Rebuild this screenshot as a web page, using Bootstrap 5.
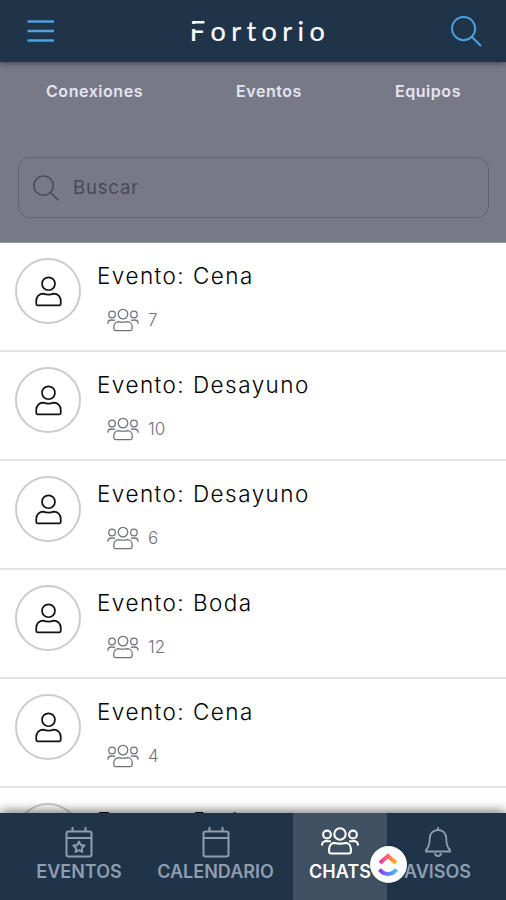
<!DOCTYPE html>
<html lang="es">
<head>
<meta charset="utf-8">
<meta name="viewport" content="width=device-width, initial-scale=1">
<title>Fortorio</title>
<link href="https://cdn.jsdelivr.net/npm/bootstrap@5.3.0/dist/css/bootstrap.min.css" rel="stylesheet">
<style>
body{font-family:Inter,"Liberation Sans",sans-serif;background:#fff}
svg{display:block;fill:none;stroke:currentColor;flex:none}
.screen{width:506px;height:900px}
.topbar{height:62px;background:#1f3349;color:#4aa3df;box-shadow:0 1px 6px rgba(20,25,40,.6);z-index:2;padding:0 24px 0 27px}
.brand{font-family:Lato,sans-serif;font-size:27px;line-height:62px;letter-spacing:5.45px;color:#fff;margin-left:14px;-webkit-text-stroke:.2px #fff}
.brand-f{position:relative;display:inline-block}
.brand-f::after{content:"";position:absolute;left:0;top:24px;width:16px;height:4.5px;background:#1f3349}
.filters{height:181px;background:#787987;border-bottom:1px solid #9b9ba6}
.filter-tabs{padding:17px 45px 0 46px}
.filter-tab{color:#e4e5f0;font-size:16px;font-weight:600;line-height:24px;letter-spacing:.55px}
.searchbox{height:61px;margin:54px 17px 0 18px;border:1.5px solid #62636f;border-radius:12px;padding-left:14px;color:#484954}
.searchbox span{font-size:18.5px;letter-spacing:.85px;margin:0 0 0 14px}
.chat-row{height:109px;padding:15px 0 0 15px;border-bottom:2px solid #e2e3e3;flex:none}
.avatar{width:66px;height:66px;border:2px solid #cbcbcb;color:#111}
.chat-title{font-size:22.5px;font-weight:300;line-height:28px;letter-spacing:1.46px;color:#000;margin:4px 0 0}
.chat-count{font-size:17px;font-weight:300;line-height:24px;color:#6e717b;margin:18px 0 0 10px;gap:9px}
.chat-count span{margin-top:-1px}
.tabbar{height:87px;background:#1f3349;box-shadow:0 -2px 10px rgba(0,0,0,.55);z-index:2;padding-left:20px}
.tab-item{color:#8e9db0;font-size:18px;font-weight:600;line-height:22px;padding-top:14px}
.tab-item svg{height:34px}
.w-a{width:118px}.w-b{width:155px}.w-c{width:94px}.w-d{width:101px}
.tab-on{background:#3e5061;color:#fff}
.float-badge{width:37px;height:37px;left:369.5px;top:846px;z-index:3;box-shadow:0 0 2px rgba(0,0,0,.4)}
</style>
</head>
<body>
<svg width="0" height="0" class="position-absolute">
<symbol id="person" viewBox="0 0 28 32"><circle cx="14" cy="8" r="6.7"/><path d="M8.500 18.200c3.700 1.500 7.300 1.500 11 0 4 0 7.200 3.200 7.200 7.500V29q0 1.300-1.300 1.300H2.600Q1.300 30.300 1.300 29v-3.300c0-4.300 3.200-7.500 7.200-7.500Z"/></symbol>
<symbol id="group" viewBox="0 0 38 28"><circle cx="19" cy="7" r="5.700"/><circle cx="6" cy="7.500" r="3.900"/><circle cx="32" cy="7.500" r="3.900"/><path d="M13.500 15.900c3.700 1 7.300 1 11 0 3 0 5.400 2.600 5.400 6.200V24.500q0 2-2 2H10.100q-2 0-2-2v-2.400c0-3.600 2.400-6.200 5.400-6.200ZM1 18.500c0-3 2-4.500 4.500-4.500 1.600.4 3 .4 4.300 0M37 18.500c0-3-2-4.500-4.500-4.500-1.600.4-3 .4-4.300 0"/></symbol>
<symbol id="lens" viewBox="0 0 30 30"><circle cx="12.200" cy="12.200" r="11.200"/><path d="m20.300 20.300 8.700 8.700"/></symbol>
<symbol id="cal" viewBox="0 0 28 32"><rect x="1.500" y="4.500" width="25" height="25" rx="2"/><path d="M1.500 11h25M7.500 0v5M20.500 0v5"/></symbol>
</svg>
<main class="screen d-flex flex-column position-relative overflow-hidden">
  <header class="topbar d-flex align-items-center justify-content-between position-relative flex-shrink-0">
    <svg width="28" height="24" viewBox="0 0 28 24" stroke-width="2.400"><path d="M.5 2.500h26.500M.5 12h26.500M.5 21.500h26.500"/></svg>
    <div class="brand"><span class="brand-f">F</span>ortorio</div>
    <svg width="31" height="31" stroke-width="1.900"><use href="#lens"/></svg>
  </header>
  <section class="filters flex-shrink-0">
    <nav class="d-flex justify-content-between filter-tabs">
      <a class="filter-tab text-decoration-none">Conexiones</a>
      <a class="filter-tab text-decoration-none">Eventos</a>
      <a class="filter-tab text-decoration-none">Equipos</a>
    </nav>
    <div class="searchbox d-flex align-items-center">
      <svg width="26" height="26" stroke-width="1.700"><use href="#lens"/></svg><span>Buscar</span>
    </div>
  </section>
  <section class="flex-grow-1 overflow-hidden d-flex flex-column" id="chats">
    <div class="chat-row d-flex gap-3"><div class="avatar rounded-circle d-flex align-items-center justify-content-center"><svg width="27" height="31" stroke-width="1.800"><use href="#person"/></svg></div><div><h2 class="chat-title">Evento: Cena</h2><div class="chat-count d-flex align-items-center"><svg width="32" height="24" stroke-width="1.500"><use href="#group"/></svg><span>7</span></div></div></div>
    <div class="chat-row d-flex gap-3"><div class="avatar rounded-circle d-flex align-items-center justify-content-center"><svg width="27" height="31" stroke-width="1.800"><use href="#person"/></svg></div><div><h2 class="chat-title">Evento: Desayuno</h2><div class="chat-count d-flex align-items-center"><svg width="32" height="24" stroke-width="1.500"><use href="#group"/></svg><span>10</span></div></div></div>
    <div class="chat-row d-flex gap-3"><div class="avatar rounded-circle d-flex align-items-center justify-content-center"><svg width="27" height="31" stroke-width="1.800"><use href="#person"/></svg></div><div><h2 class="chat-title">Evento: Desayuno</h2><div class="chat-count d-flex align-items-center"><svg width="32" height="24" stroke-width="1.500"><use href="#group"/></svg><span>6</span></div></div></div>
    <div class="chat-row d-flex gap-3"><div class="avatar rounded-circle d-flex align-items-center justify-content-center"><svg width="27" height="31" stroke-width="1.800"><use href="#person"/></svg></div><div><h2 class="chat-title">Evento: Boda</h2><div class="chat-count d-flex align-items-center"><svg width="32" height="24" stroke-width="1.500"><use href="#group"/></svg><span>12</span></div></div></div>
    <div class="chat-row d-flex gap-3"><div class="avatar rounded-circle d-flex align-items-center justify-content-center"><svg width="27" height="31" stroke-width="1.800"><use href="#person"/></svg></div><div><h2 class="chat-title">Evento: Cena</h2><div class="chat-count d-flex align-items-center"><svg width="32" height="24" stroke-width="1.500"><use href="#group"/></svg><span>4</span></div></div></div>
    <div class="chat-row d-flex gap-3"><div class="avatar rounded-circle"></div><div><h2 class="chat-title">Evento: Boda</h2></div></div>
  </section>
  <nav class="tabbar d-flex position-relative flex-shrink-0">
    <a class="tab-item w-a d-flex flex-column align-items-center text-decoration-none"><svg width="28" viewBox="0 0 28 34" stroke-width="2"><use href="#cal" width="28" height="32"/><path stroke-width="1.900" stroke-linejoin="round" d="m14 14.500 1.700 3.500 3.900.5-2.900 2.700.7 3.800-3.400-1.800-3.400 1.800.7-3.800-2.900-2.700 3.900-.5Z"/></svg>EVENTOS</a>
    <a class="tab-item w-b d-flex flex-column align-items-center text-decoration-none"><svg width="28" viewBox="0 0 28 34" stroke-width="2"><use href="#cal" width="28" height="32"/></svg>CALENDARIO</a>
    <a class="tab-item tab-on w-c d-flex flex-column align-items-center text-decoration-none"><svg width="38" viewBox="0 0 38 34" stroke-width="2.100"><use href="#group" width="38" height="28"/></svg>CHATS</a>
    <a class="tab-item w-d d-flex flex-column align-items-center text-decoration-none"><svg width="28" viewBox="0 0 28 34" stroke-width="1.800"><path d="M14 0v3M14 3c-5 0-8.300 3.500-8.300 8.500 0 6-1 9-3.700 11.500v1.500h24V23c-2.700-2.500-3.700-5.500-3.700-11.500C22.300 6.500 19 3 14 3ZM11 26c0 4 6 4 6 0"/></svg>AVISOS</a>
  </nav>
  <div class="float-badge position-absolute bg-white rounded-circle d-flex align-items-center justify-content-center">
    <svg width="20" height="24" viewBox="0 0 20 24" stroke-width="4"><defs><linearGradient id="warm"><stop stop-color="#ff2fb2"/><stop offset=".5" stop-color="#ff6a6b"/><stop offset="1" stop-color="#ffb80a"/></linearGradient><linearGradient id="cool"><stop stop-color="#8a3cf6"/><stop offset="1" stop-color="#4bbcfb"/></linearGradient></defs><path stroke="url(#warm)" d="m2 10 8-7 8 7"/><path stroke="url(#cool)" d="M1.500 16.500c4.500 6 12.500 6 17 0"/></svg>
  </div>
</main>
<script src="https://cdn.jsdelivr.net/npm/bootstrap@5.3.0/dist/js/bootstrap.bundle.min.js"></script>
</body>
</html>
